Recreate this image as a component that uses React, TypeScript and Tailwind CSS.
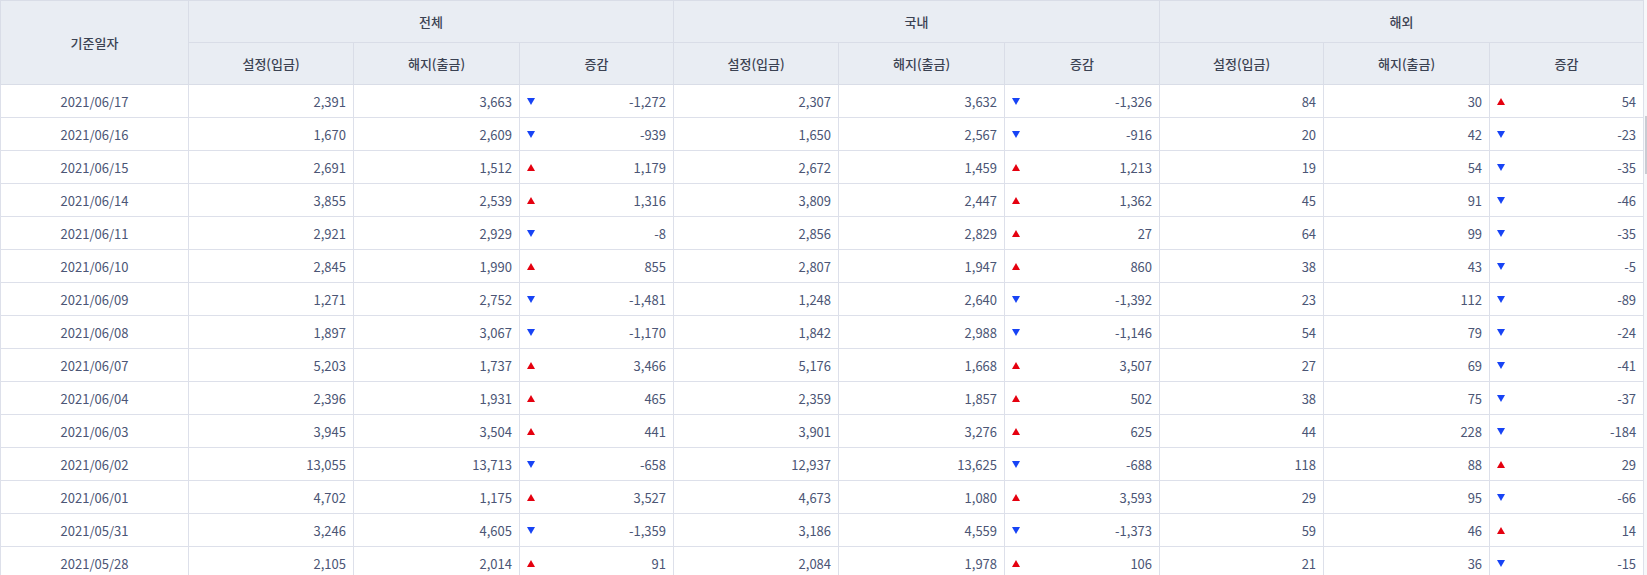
import React from 'react'

type Group = [number, number, number]

interface Row {
  date: string
  total: Group
  domestic: Group
  overseas: Group
}

const rows: Row[] = [
  { date: '2021/06/17', total: [2391, 3663, -1272], domestic: [2307, 3632, -1326], overseas: [84, 30, 54] },
  { date: '2021/06/16', total: [1670, 2609, -939], domestic: [1650, 2567, -916], overseas: [20, 42, -23] },
  { date: '2021/06/15', total: [2691, 1512, 1179], domestic: [2672, 1459, 1213], overseas: [19, 54, -35] },
  { date: '2021/06/14', total: [3855, 2539, 1316], domestic: [3809, 2447, 1362], overseas: [45, 91, -46] },
  { date: '2021/06/11', total: [2921, 2929, -8], domestic: [2856, 2829, 27], overseas: [64, 99, -35] },
  { date: '2021/06/10', total: [2845, 1990, 855], domestic: [2807, 1947, 860], overseas: [38, 43, -5] },
  { date: '2021/06/09', total: [1271, 2752, -1481], domestic: [1248, 2640, -1392], overseas: [23, 112, -89] },
  { date: '2021/06/08', total: [1897, 3067, -1170], domestic: [1842, 2988, -1146], overseas: [54, 79, -24] },
  { date: '2021/06/07', total: [5203, 1737, 3466], domestic: [5176, 1668, 3507], overseas: [27, 69, -41] },
  { date: '2021/06/04', total: [2396, 1931, 465], domestic: [2359, 1857, 502], overseas: [38, 75, -37] },
  { date: '2021/06/03', total: [3945, 3504, 441], domestic: [3901, 3276, 625], overseas: [44, 228, -184] },
  { date: '2021/06/02', total: [13055, 13713, -658], domestic: [12937, 13625, -688], overseas: [118, 88, 29] },
  { date: '2021/06/01', total: [4702, 1175, 3527], domestic: [4673, 1080, 3593], overseas: [29, 95, -66] },
  { date: '2021/05/31', total: [3246, 4605, -1359], domestic: [3186, 4559, -1373], overseas: [59, 46, 14] },
  { date: '2021/05/28', total: [2105, 2014, 91], domestic: [2084, 1978, 106], overseas: [21, 36, -15] },
]

const fmt = (n: number) => n.toLocaleString('en-US')

function Arrow({ up }: { up: boolean }) {
  return up ? (
    <svg width="8" height="7" viewBox="0 0 8 7" className="block">
      <path d="M4 0 L8 7 L0 7 Z" fill="#e5000f" />
    </svg>
  ) : (
    <svg width="8" height="7" viewBox="0 0 8 7" className="block">
      <path d="M0 0 L8 0 L4 7 Z" fill="#1743f5" />
    </svg>
  )
}

const th = 'border border-[#d9dde7] bg-[#e9edf3] font-medium text-[#3b4252] text-[13px] text-center'
const td = 'border border-[#dde0ea] h-[33px] px-[7px] text-[13px] text-[#4b5575]'

function GroupCells({ g }: { g: Group }) {
  const diff = g[2]
  return (
    <>
      <td className={`${td} text-right`}>{fmt(g[0])}</td>
      <td className={`${td} text-right`}>{fmt(g[1])}</td>
      <td className={td}>
        <div className="flex items-center justify-between">
          <Arrow up={diff > 0} />
          <span>{fmt(diff)}</span>
        </div>
      </td>
    </>
  )
}

export default function App() {
  const widths = [188, 165, 166, 154, 165, 166, 155, 164, 166, 154]
  return (
    <div
      className="flex bg-white h-[575px] overflow-hidden"
      style={{ fontFamily: '"Noto Sans CJK KR", "Noto Sans", sans-serif' }}
    >
      <table className="table-fixed border-collapse w-[1644px] shrink-0 leading-none">
        <colgroup>
          {widths.map((w, i) => (
            <col key={i} style={{ width: w }} />
          ))}
        </colgroup>
        <thead>
          <tr className="h-[42px]">
            <th rowSpan={2} className={th}>기준일자</th>
            <th colSpan={3} className={th}>전체</th>
            <th colSpan={3} className={th}>국내</th>
            <th colSpan={3} className={th}>해외</th>
          </tr>
          <tr className="h-[42px]">
            {[0, 1, 2].map((i) => (
              <React.Fragment key={i}>
                <th className={th}>설정(입금)</th>
                <th className={th}>해지(출금)</th>
                <th className={th}>증감</th>
              </React.Fragment>
            ))}
          </tr>
        </thead>
        <tbody>
          {rows.map((r) => (
            <tr key={r.date}>
              <td className={`${td} text-center`}>{r.date}</td>
              <GroupCells g={r.total} />
              <GroupCells g={r.domestic} />
              <GroupCells g={r.overseas} />
            </tr>
          ))}
        </tbody>
      </table>
      <div className="flex-1 bg-[#f7f8fa] flex justify-end">
        <div className="w-[2px] h-[58px] mt-[116px] bg-[#c9ccd3]" />
      </div>
    </div>
  )
}
